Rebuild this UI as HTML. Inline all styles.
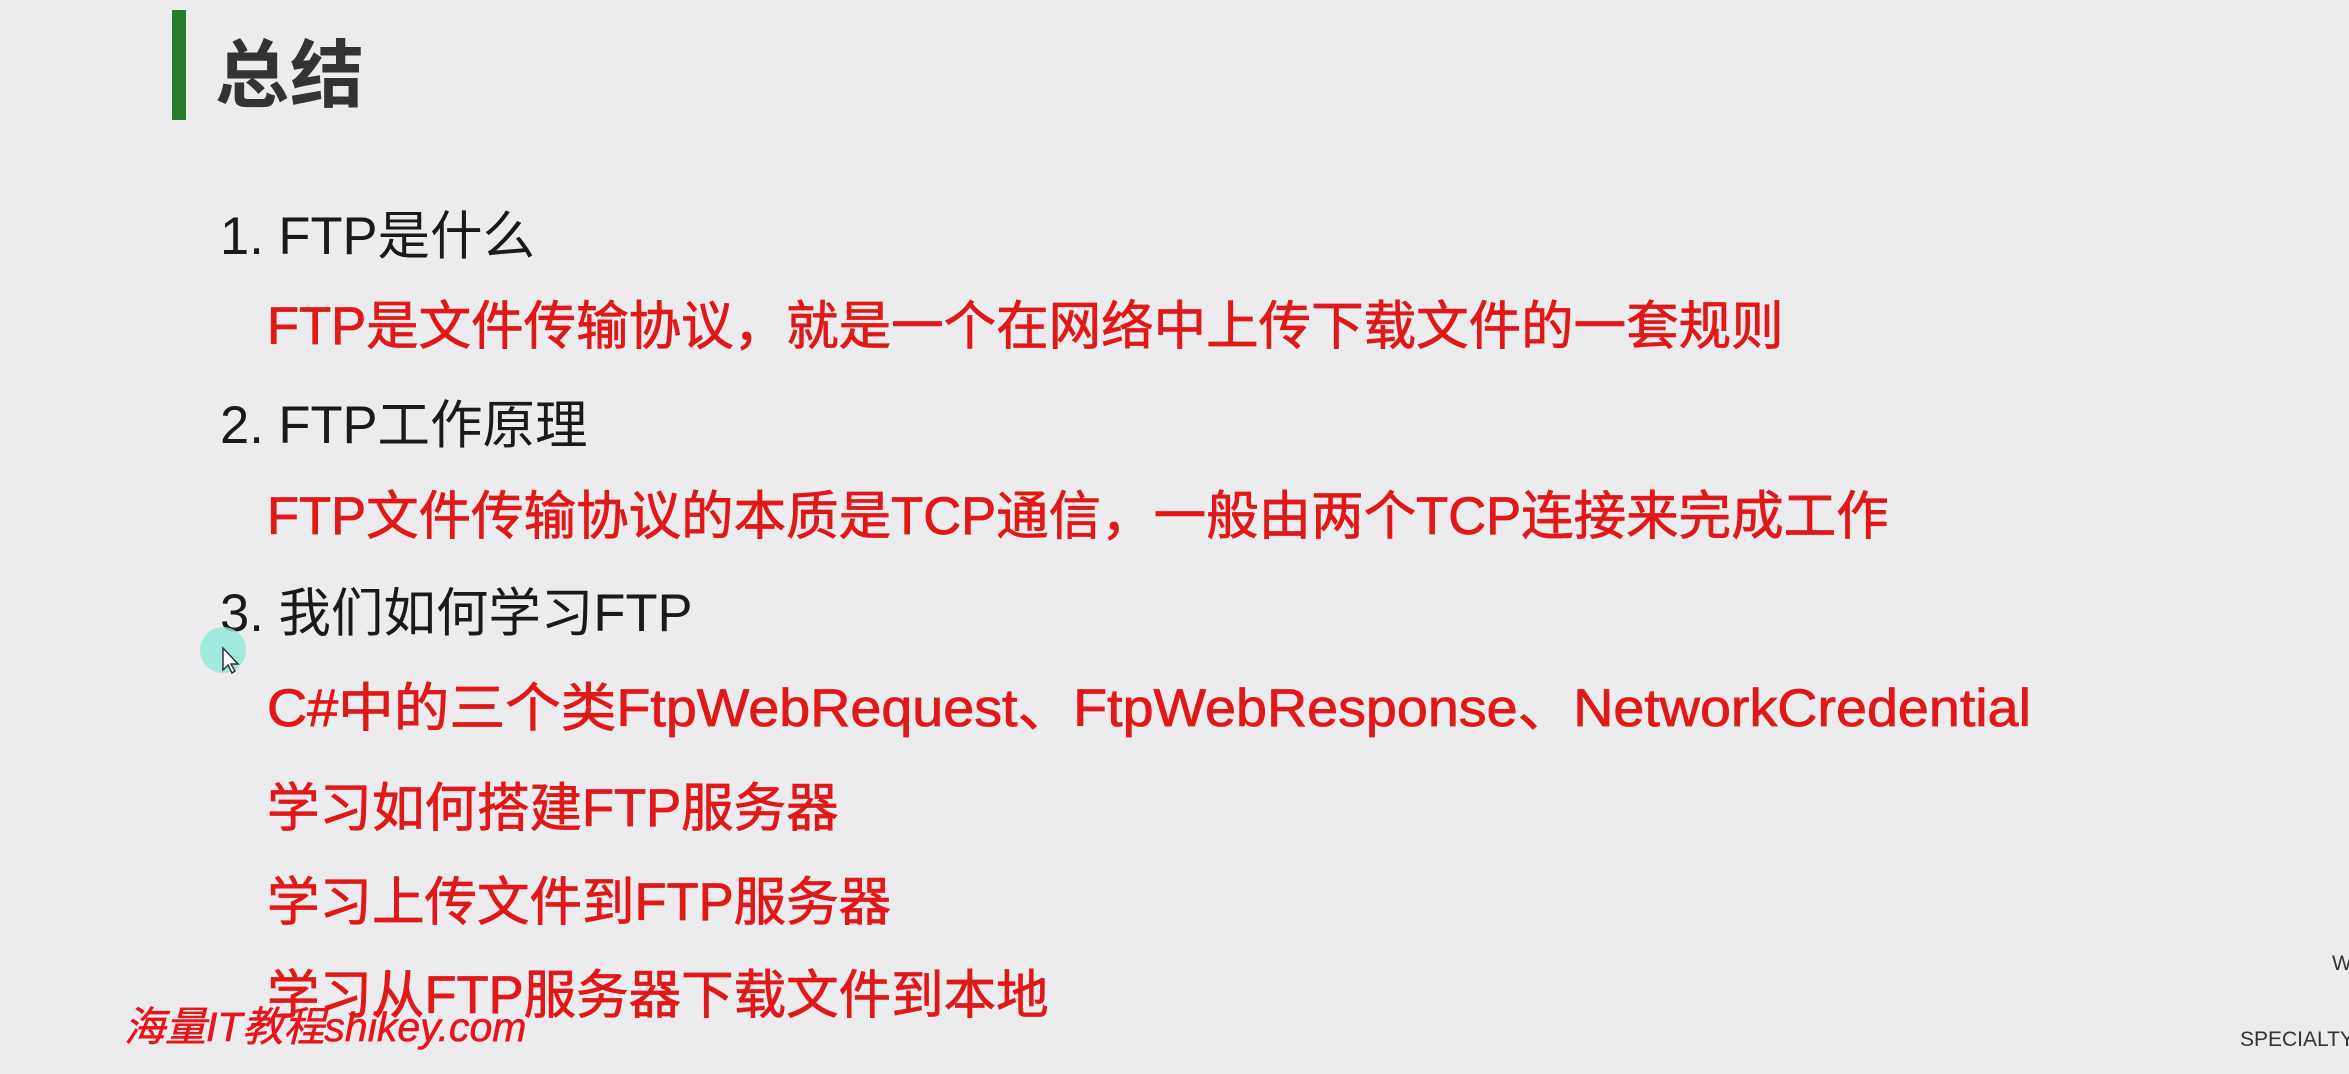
<!DOCTYPE html>
<html><head><meta charset="utf-8"><style>
html,body{margin:0;padding:0;}
body{width:2349px;height:1074px;background:#ecebed;position:relative;overflow:hidden;font-family:"Liberation Sans","Noto Sans CJK SC",sans-serif;}
.bar{position:absolute;left:172px;top:10px;width:14px;height:110px;background:#2a7a2f;}
.title{position:absolute;left:215px;top:36px;font-size:74px;line-height:80px;font-weight:bold;color:#333;letter-spacing:1px;}
.l{position:absolute;font-size:52.5px;line-height:56px;white-space:nowrap;transform-origin:0 50%;}
.b{left:220px;color:#1a1a1a;}
.r{left:267px;color:#e01818;font-weight:400;-webkit-text-stroke:0.8px #e01818;}
.wm{position:absolute;left:124px;top:1004px;font-size:41px;line-height:46px;font-style:italic;color:#e8141a;white-space:nowrap;-webkit-text-stroke:0.6px #e8141a;}
.sm{position:absolute;font-size:21px;color:#333;white-space:nowrap;}
</style></head><body>
<div class="bar"></div>
<div class="title">总结</div>
<div class="l b" style="top:209px">1. FTP是什么</div>
<div class="l r" style="top:299px">FTP是文件传输协议，就是一个在网络中上传下载文件的一套规则</div>
<div class="l b" style="top:398px">2. FTP工作原理</div>
<div class="l r" style="top:489px">FTP文件传输协议的本质是TCP通信，一般由两个TCP连接来完成工作</div>
<div class="l b" style="top:586px">3. 我们如何学习FTP</div>
<div class="l r" style="top:681px;transform:scaleX(1.06)">C#中的三个类FtpWebRequest、FtpWebResponse、NetworkCredential</div>
<div class="l r" style="top:781px">学习如何搭建FTP服务器</div>
<div class="l r" style="top:875px">学习上传文件到FTP服务器</div>
<div class="l r" style="top:968px">学习从FTP服务器下载文件到本地</div>
<div class="wm">海量IT教程shikey.com</div>
<div class="sm" style="left:2332px;top:952px">W</div>
<div class="sm" style="left:2240px;top:1028px">SPECIALTY</div>
<svg style="position:absolute;left:190px;top:620px" width="60" height="60">
<circle cx="33" cy="30" r="23" fill="#8fe8d8" opacity="0.8"/>
<path d="M33 28 L33 50 L38 45 L42 53 L45 51 L41 44 L48 44 Z" fill="#fff" stroke="#333" stroke-width="1.5"/>
</svg>
</body></html>
